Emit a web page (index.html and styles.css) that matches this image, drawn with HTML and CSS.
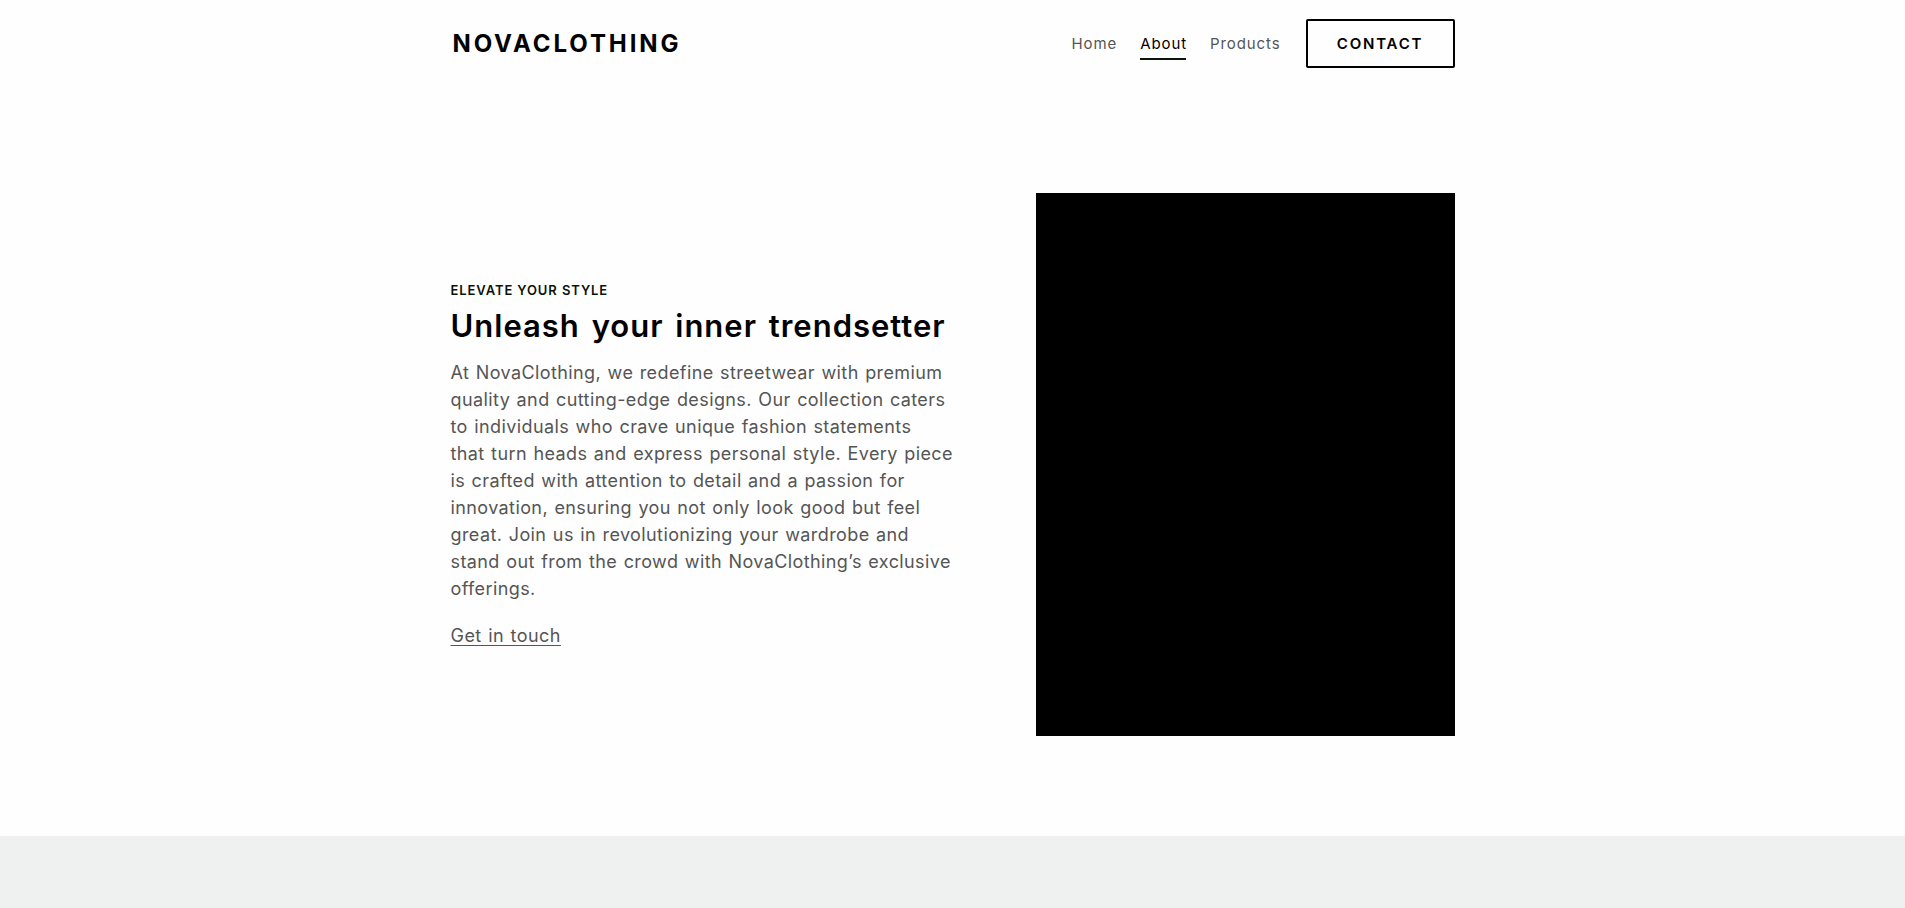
FILE: index.html
```html
<!DOCTYPE html>
<html lang="en">
<head>
<meta charset="utf-8">
<title>NovaClothing</title>
<link rel="stylesheet" href="styles.css">
</head>
<body>
<header class="site-header">
  <div class="container header-inner">
    <a class="logo" href="#">NOVACLOTHING</a>
    <nav class="nav">
      <a class="nav-link" href="#">Home</a>
      <a class="nav-link active" href="#">About</a>
      <a class="nav-link" href="#">Products</a>
      <a class="btn-contact" href="#">CONTACT</a>
    </nav>
  </div>
</header>
<main>
  <section class="hero">
    <div class="container hero-inner">
      <div class="hero-text">
        <p class="eyebrow">ELEVATE YOUR STYLE</p>
        <h1 class="hero-title">Unleash your inner trendsetter</h1>
        <p class="hero-body">At NovaClothing, we redefine streetwear with premium<br>
quality and cutting-edge designs. Our collection caters<br>
to individuals who crave unique fashion statements<br>
that turn heads and express personal style. Every piece<br>
is crafted with attention to detail and a passion for<br>
innovation, ensuring you not only look good but feel<br>
great. Join us in revolutionizing your wardrobe and<br>
stand out from the crowd with NovaClothing’s exclusive<br>
offerings.</p>
        <a class="hero-link" href="#">Get in touch</a>
      </div>
      <div class="hero-image"></div>
    </div>
  </section>
  <section class="band"></section>
</main>
</body>
</html>
```

FILE: styles.css
```css
* { box-sizing: border-box; }
html, body { margin: 0; padding: 0; }
body {
  font-family: Inter, "Liberation Sans", sans-serif;
  background: #fefefe;
  color: #000;
}
a { text-decoration: none; color: inherit; }

.container {
  width: 1004px;
  margin: 0 auto;
}

.site-header { height: 87px; }
.header-inner {
  height: 100%;
  display: flex;
  align-items: center;
  justify-content: space-between;
}
.logo {
  font-size: 24px;
  font-weight: 700;
  letter-spacing: 2.9px;
  color: #000;
  padding-left: 2px;
}
.nav {
  display: flex;
  align-items: center;
  gap: 23px;
}
.nav-link {
  font-size: 15px;
  letter-spacing: 0.9px;
  color: #555;
  position: relative;
  line-height: 20px;
}
.nav-link.active { color: #000; }
.nav-link.active::after {
  content: "";
  position: absolute;
  left: 0;
  right: 1px;
  bottom: -6px;
  height: 2px;
  background: #0a1408;
}
.btn-contact {
  display: inline-flex;
  align-items: center;
  justify-content: center;
  width: 149px;
  height: 49px;
  margin-left: 2px;
  border: 2px solid #000;
  border-radius: 2px;
  font-size: 15px;
  font-weight: 600;
  letter-spacing: 1.8px;
  color: #000;
}

.hero { padding: 106px 0 100px; }
.hero-inner {
  display: flex;
  align-items: center;
  justify-content: space-between;
}
.hero-text { width: 510px; }
.eyebrow {
  margin: 0 0 6px;
  font-size: 13px;
  line-height: 21px;
  font-weight: 600;
  letter-spacing: 0.9px;
  color: #0a1408;
}
.hero-title {
  margin: 0 0 14px;
  font-size: 31px;
  line-height: 38px;
  font-weight: 600;
  letter-spacing: 1px;
  word-spacing: 3px;
}
.hero-body {
  margin: 0 0 20px;
  font-size: 18px;
  line-height: 27px;
  color: #555;
  letter-spacing: 0.4px;
  word-spacing: 1px;
  white-space: nowrap;
}
.hero-link {
  display: inline-block;
  font-size: 18px;
  line-height: 27px;
  color: #555;
  letter-spacing: 0.45px;
  word-spacing: 1px;
  text-decoration: underline;
  text-underline-offset: 3px;
  text-decoration-thickness: 1px;
}
.hero-image {
  width: 419px;
  height: 543px;
  background: #000;
}

.band {
  height: 300px;
  background: #eff1f0;
}
```
